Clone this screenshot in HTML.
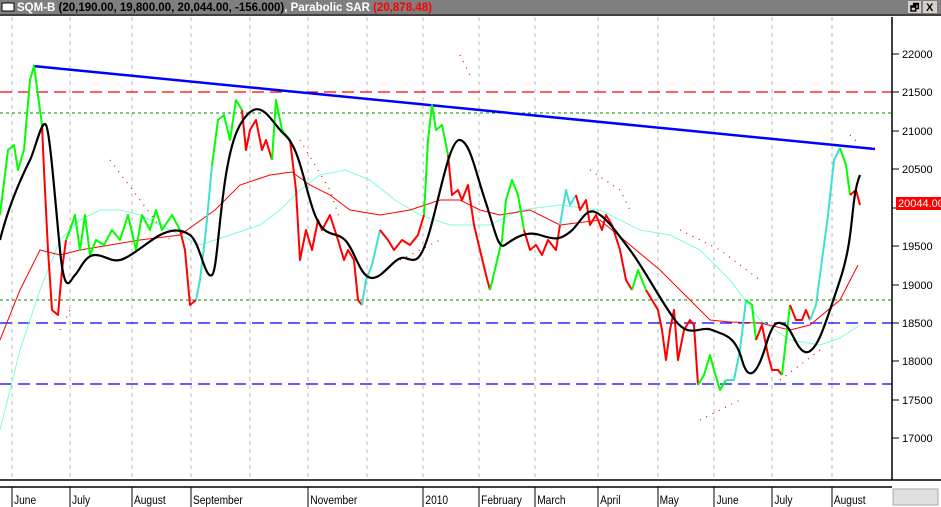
<!DOCTYPE html>
<html><head><style>
body{margin:0;width:941px;height:507px;overflow:hidden;background:#fff;font-family:"Liberation Sans",sans-serif;}
</style></head><body>
<svg width="941" height="507" xmlns="http://www.w3.org/2000/svg" style="position:absolute;left:0;top:0">
<rect x="0" y="0" width="941" height="14" fill="#7f7f7f"/>
<rect x="2" y="3" width="12" height="8" fill="#fff" stroke="#000" stroke-width="1"/>
<text x="17" y="11" font-size="11.5" font-weight="bold" fill="#fff">SQM-B <tspan fill="#000">(20,190.00, 19,800.00, 20,044.00, -156.000)</tspan>, Parabolic SAR <tspan fill="#f00">(20,878.48)</tspan></text>
<rect x="908" y="1" width="13" height="12" fill="#d4d0c8"/><text x="910" y="11" font-size="10" font-weight="bold">🗗</text>
<rect x="923" y="1" width="14" height="12" fill="#d4d0c8"/><text x="926" y="11" font-size="11" font-weight="bold">X</text>
<line x1="0" y1="15" x2="941" y2="15" stroke="#000" stroke-width="1.5"/>
<g stroke="#bbb" stroke-dasharray="4,4" stroke-width="1">
<line x1="12" y1="17" x2="12" y2="479"/><line x1="70" y1="17" x2="70" y2="479"/><line x1="132" y1="17" x2="132" y2="479"/><line x1="191" y1="17" x2="191" y2="479"/><line x1="250" y1="17" x2="250" y2="479"/><line x1="308" y1="17" x2="308" y2="479"/><line x1="367" y1="17" x2="367" y2="479"/><line x1="423" y1="17" x2="423" y2="479"/><line x1="479" y1="17" x2="479" y2="479"/><line x1="535" y1="17" x2="535" y2="479"/><line x1="598" y1="17" x2="598" y2="479"/><line x1="658" y1="17" x2="658" y2="479"/><line x1="714" y1="17" x2="714" y2="479"/><line x1="772" y1="17" x2="772" y2="479"/><line x1="832" y1="17" x2="832" y2="479"/>
</g>
<line x1="0" y1="92" x2="892" y2="92" stroke="#f00" stroke-dasharray="12,6" stroke-width="1.2"/>
<line x1="0" y1="113" x2="892" y2="113" stroke="#080" stroke-dasharray="3,3"/>
<line x1="0" y1="300" x2="892" y2="300" stroke="#080" stroke-dasharray="3,3"/>
<line x1="0" y1="323" x2="892" y2="323" stroke="#00f" stroke-dasharray="12,6" stroke-width="1.2"/>
<line x1="0" y1="384" x2="892" y2="384" stroke="#00f" stroke-dasharray="12,6" stroke-width="1.2"/>
<line x1="33" y1="66" x2="875" y2="149" stroke="#00f" stroke-width="2.5"/>
<polyline fill="none" stroke="#7fffd4" stroke-width="1" points="0,430 20,350 40,290 60,240 80,220 100,210 120,210 140,215 170,230 200,245 230,235 260,225 280,210 300,190 320,175 345,170 370,180 395,200 420,215 450,225 490,225 520,210 560,205 600,210 640,230 670,235 700,250 730,280 760,320 790,340 820,345 840,338 860,325"/>
<polyline fill="none" stroke="#f00" stroke-width="1" points="0,340 20,290 40,250 60,255 80,250 110,245 140,240 180,235 215,210 240,185 270,175 292,172 310,185 330,195 350,210 380,215 410,210 440,200 460,200 480,210 500,215 530,210 560,225 600,220 630,245 660,270 690,300 710,320 730,322 760,323 790,330 810,325 840,300 858,265"/>
<g fill="none" stroke="#f00" stroke-width="1.2" stroke-dasharray="1,6">
<polyline points="110,160 140,200 170,240"/><polyline points="60,330 70,310"/><polyline points="300,140 330,190 340,220"/><polyline points="590,170 620,190 630,210"/><polyline points="680,230 720,250 760,280"/><polyline points="700,420 740,400"/><polyline points="780,380 820,350"/><polyline points="400,260 440,240"/><polyline points="850,135 860,145"/><polyline points="460,55 470,75"/>
</g>
<g fill="none" stroke-width="2" stroke-linejoin="round">
<polyline stroke="#0f0" points="0,215 8,150 14,145 18,170 24,150 30,80 34,66 38,95 42,125"/>
<polyline stroke="#f00" points="42,125 44,170 48,250 52,310 58,315 62,270 66,240"/>
<polyline stroke="#0f0" points="66,240 70,230 75,215 80,250 85,215 90,255 96,240 104,245 112,230 120,240 128,215 136,250 142,215 150,230 156,210 162,230 172,215 180,230"/>
<polyline stroke="#f00" points="180,230 185,250 190,305 196,300"/>
<polyline stroke="#40e0d0" points="196,300 200,280 206,230 212,165"/>
<polyline stroke="#0f0" points="212,165 218,120 224,115 230,140 236,100 242,110"/>
<polyline stroke="#f00" points="242,110 246,150 250,130 256,120 262,150 266,140 272,160"/>
<polyline stroke="#0f0" points="272,160 276,100 282,130 290,140"/>
<polyline stroke="#f00" points="290,140 296,190 300,260 306,230 312,250 318,220 322,230 330,215 338,240 344,260 348,250 354,260 358,300 362,305"/>
<polyline stroke="#40e0d0" points="362,305 366,280 372,265 380,230"/>
<polyline stroke="#f00" points="380,230 388,240 394,250 402,240 410,245 418,235 424,215"/>
<polyline stroke="#0f0" points="424,215 428,140 432,105 436,130 442,125 448,155"/>
<polyline stroke="#f00" points="448,155 452,195 458,190 462,200 468,185 474,225 480,250 486,275 490,290"/>
<polyline stroke="#0f0" points="490,290 496,265 502,240 506,200 512,180 518,195 524,230"/>
<polyline stroke="#f00" points="524,230 530,250 536,245 542,255 548,240 556,250 560,225"/>
<polyline stroke="#40e0d0" points="560,225 566,190 570,205 576,195"/>
<polyline stroke="#f00" points="576,195 580,210 586,200 590,225 596,215 602,230 606,215 612,225 620,250 626,280 632,290"/>
<polyline stroke="#0f0" points="632,290 638,270 646,290"/>
<polyline stroke="#f00" points="646,290 652,300 658,310 662,330 666,360 670,330 674,310 678,360 684,330 690,320 694,325 698,385"/>
<polyline stroke="#0f0" points="698,385 704,375 710,355 714,370 720,390 726,380"/>
<polyline stroke="#40e0d0" points="726,380 734,380 740,350 746,300"/>
<polyline stroke="#0f0" points="746,300 752,305 756,340"/>
<polyline stroke="#f00" points="756,340 762,325 768,355 772,370 778,370 782,375"/>
<polyline stroke="#0f0" points="782,375 786,340 790,305"/>
<polyline stroke="#f00" points="790,305 796,320 802,320 806,310 810,320"/>
<polyline stroke="#40e0d0" points="810,320 816,305 822,260 828,215 834,160 840,148"/>
<polyline stroke="#0f0" points="840,148 846,165 850,195"/>
<polyline stroke="#f00" points="850,195 856,190 860,205"/>
</g>
<path fill="none" stroke="#000" stroke-width="2.2" stroke-linejoin="round" d="M0,240 C10,200 25,170 30,160 S42,118 46,125 S55,200 60,250 S70,280 75,275 S85,255 95,255 S110,262 120,260 S150,240 160,235 S180,228 190,235 S205,280 212,275 S220,160 240,125 S270,122 285,135 S305,190 315,215 S335,230 345,240 S360,278 372,278 S395,255 405,258 S420,265 430,230 S450,138 460,140 S475,170 485,200 S498,250 505,245 S525,230 540,235 S560,240 570,232 S585,208 595,212 S615,230 630,250 S660,300 675,320 S700,325 712,330 S735,335 742,360 S758,372 766,345 S778,322 785,325 S798,355 808,352 S825,325 840,280 S850,200 860,175"/>
<rect x="892" y="17" width="49" height="462" fill="#fff"/>
<line x1="892" y1="17" x2="892" y2="480" stroke="#000" stroke-width="1.5"/>
<g stroke="#000">
<line x1="892" y1="54" x2="899" y2="54"/><line x1="892" y1="92" x2="899" y2="92"/><line x1="892" y1="131" x2="899" y2="131"/><line x1="892" y1="169" x2="899" y2="169"/><line x1="892" y1="208" x2="899" y2="208"/><line x1="892" y1="246" x2="899" y2="246"/><line x1="892" y1="285" x2="899" y2="285"/><line x1="892" y1="323" x2="899" y2="323"/><line x1="892" y1="361" x2="899" y2="361"/><line x1="892" y1="400" x2="899" y2="400"/><line x1="892" y1="438" x2="899" y2="438"/>
</g>
<g font-size="11" fill="#000">
<text x="902" y="58">22000</text><text x="902" y="96">21500</text><text x="902" y="135">21000</text><text x="902" y="173">20500</text><text x="902" y="250">19500</text><text x="902" y="289">19000</text><text x="902" y="327">18500</text><text x="902" y="365">18000</text><text x="902" y="404">17500</text><text x="902" y="442">17000</text>
</g>
<rect x="896" y="197" width="45" height="13" fill="#f00"/>
<text x="898" y="207" font-size="11" fill="#fff">20044.00</text>
<line x1="0" y1="480" x2="941" y2="480" stroke="#000" stroke-width="1.5"/>
<line x1="0" y1="487" x2="892" y2="487" stroke="#000" stroke-width="1.5"/>
<g stroke="#000">
<line x1="12" y1="487" x2="12" y2="507"/><line x1="70" y1="487" x2="70" y2="507"/><line x1="132" y1="487" x2="132" y2="507"/><line x1="191" y1="487" x2="191" y2="507"/><line x1="308" y1="487" x2="308" y2="507"/><line x1="423" y1="487" x2="423" y2="507"/><line x1="479" y1="487" x2="479" y2="507"/><line x1="535" y1="487" x2="535" y2="507"/><line x1="598" y1="487" x2="598" y2="507"/><line x1="658" y1="487" x2="658" y2="507"/><line x1="714" y1="487" x2="714" y2="507"/><line x1="772" y1="487" x2="772" y2="507"/><line x1="832" y1="487" x2="832" y2="507"/>
</g>
<g font-size="12" fill="#000" transform="scale(0.85,1)">
<text x="16.5" y="504">June</text><text x="84.7" y="504">July</text><text x="157.6" y="504">August</text><text x="227" y="504">September</text><text x="365" y="504">November</text><text x="500.5" y="504">2010</text><text x="566" y="504">February</text><text x="632" y="504">March</text><text x="706" y="504">April</text><text x="776" y="504">May</text><text x="843" y="504">June</text><text x="911" y="504">July</text><text x="981" y="504">August</text>
</g>
<rect x="893" y="489" width="45" height="16" fill="#e0e0e0" stroke="#aaa"/>
</svg>
</body></html>
